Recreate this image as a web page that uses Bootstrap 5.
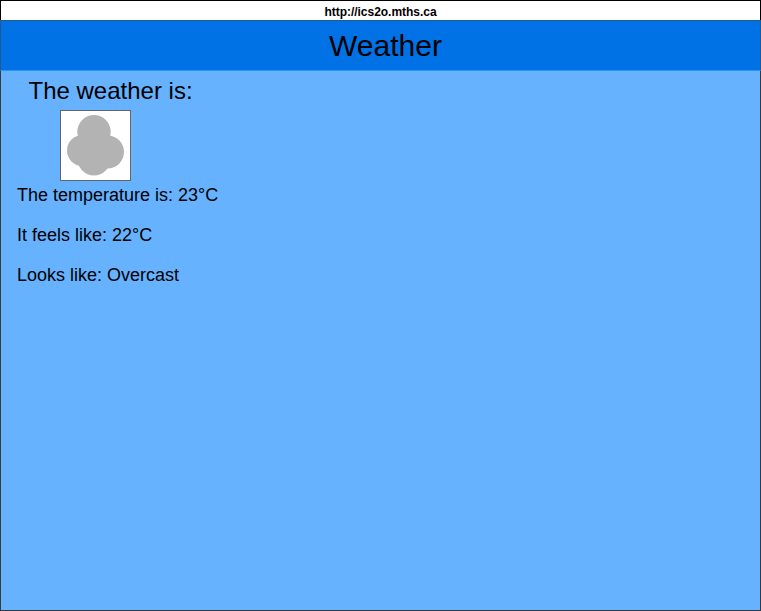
<!DOCTYPE html>
<html lang="en">
<head>
<meta charset="utf-8">
<title>Weather</title>
<link href="https://cdn.jsdelivr.net/npm/bootstrap@5.3.0/dist/css/bootstrap.min.css" rel="stylesheet">
<style>
body{font-family:"Liberation Sans",Arial,sans-serif;color:#000}
.screen{width:761px;height:611px;background:#66b2ff}
.address{height:20px;border:1px solid #000;border-bottom:0;font-size:12px;line-height:22px;letter-spacing:-.03px}
.topbar{height:51px;background:#0072e5;border:1px solid #23598f;border-bottom-color:#3390f0;padding-left:10px}
.topbar h1{font-size:30px;line-height:49px}
.content{border:1px solid #36393d;border-top:0}
.heading{font-size:24px;line-height:29px;margin:5px 0 0 27.5px}
.pic{display:block;margin:5px 0 0 59px}
.readings{padding-left:16px;font-size:18px}
.readings p{line-height:20px;margin:4px 0 20px}
</style>
</head>
<body>
<main class="screen d-flex flex-column overflow-hidden">
<div class="address bg-white text-center fw-bold">http://ics2o.mths.ca</div>
<header class="topbar text-center"><h1 class="m-0 fw-normal">Weather</h1></header>
<div class="content flex-grow-1">
<div class="d-flex flex-column">
<h2 class="heading fw-normal">The weather is:</h2>
<svg class="pic" width="71" height="71" viewBox="0 0 71 71"><rect x=".5" y=".5" width="70" height="70" fill="#fff" stroke="#666"/><g fill="#b3b3b3"><circle cx="34" cy="21.800" r="16.700"/><circle cx="22.500" cy="40.500" r="15.500"/><circle cx="47.500" cy="42" r="16.500"/><circle cx="34" cy="48.700" r="16.700"/></g></svg>
<section class="readings"><p>The temperature is: 23°C</p><p>It feels like: 22°C</p><p>Looks like: Overcast</p></section>
</div>
</div>
</main>
<script src="https://cdn.jsdelivr.net/npm/bootstrap@5.3.0/dist/js/bootstrap.bundle.min.js"></script>
</body>
</html>
